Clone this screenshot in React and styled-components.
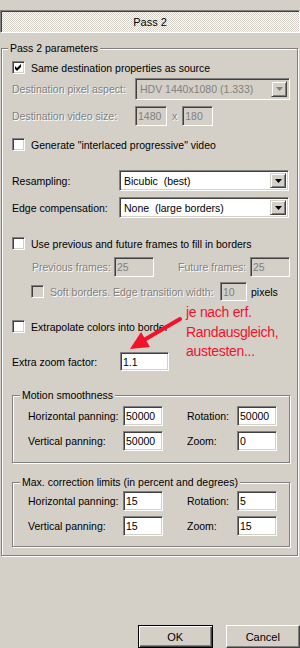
import React from 'react';
import styled, { createGlobalStyle } from 'styled-components';

const GlobalStyle = createGlobalStyle`
  html, body {
    margin: 0;
    padding: 0;
    background: #d4d0c8;
  }
  body {
    font-family: "Liberation Sans", Arial, sans-serif;
    font-size: 10.5px;
    color: #000;
  }
`;

const sunken = `
  border: 1px solid;
  border-color: #808080 #fff #fff #808080;
  box-shadow: inset 1px 1px 0 #404040, inset -1px -1px 0 #d4d0c8;
`;

const Window = styled.div`
  position: relative;
  width: 300px;
  height: 648px;
  overflow: hidden;
  display: flex;
  flex-direction: column;
  background: #d4d0c8;
`;

const PassHeader = styled.div`
  margin-top: 10px;
  height: 23px;
  box-sizing: border-box;
  border: 1px solid;
  border-color: #808080 #fff #fff #808080;
  box-shadow: inset 1px 1px 0 #404040;
  background: repeating-conic-gradient(#fff 0 25%, #d4d0c8 0 50%) 0 0 / 2px 2px;
  font-size: 11px;
  display: flex;
  align-items: center;
  justify-content: center;
`;

const Group = styled.fieldset`
  margin: ${(p) => p.$mt}px ${(p) => p.$mr}px 0 ${(p) => p.$ml}px;
  padding: 0 0 ${(p) => p.$pb}px 0;
  border: 1px solid #808080;
  box-shadow: inset 1px 1px 0 #fff, 1px 1px 0 #fff;
  min-width: 0;
  display: flex;
  flex-direction: column;
`;

const Legend = styled.legend`
  margin-left: ${(p) => p.$ml}px;
  padding: 0 2px;
  line-height: 13px;
  background: #d4d0c8;
`;

const Row = styled.div`
  display: flex;
  align-items: center;
  height: ${(p) => p.$h}px;
  margin-top: ${(p) => p.$mt}px;
  padding-left: ${(p) => p.$indent || 0}px;
`;

const Label = styled.span`
  width: ${(p) => (p.$w ? `${p.$w}px` : 'auto')};
  flex: none;
  white-space: nowrap;
  color: ${(p) => (p.$off ? '#808080' : '#000')};
  text-shadow: ${(p) => (p.$off ? '1px 1px 0 #fff' : 'none')};
  margin-left: ${(p) => p.$ml || 0}px;
`;

const PanGrid = styled.div`
  display: grid;
  grid-template-columns: 95px 40px 24px 50px 40px;
  grid-auto-rows: 20px;
  row-gap: 5px;
  align-items: center;
  margin-top: ${(p) => p.$mt}px;
  padding-left: 15px;
`;

const Field = styled.input`
  box-sizing: border-box;
  width: ${(p) => p.$w}px;
  height: ${(p) => p.$h || 20}px;
  margin: 0 0 0 ${(p) => p.$ml || 0}px;
  padding: 0 0 0 2px;
  font: 10.5px "Liberation Sans", Arial, sans-serif;
  color: ${(p) => (p.disabled ? '#808080' : '#000')};
  -webkit-text-fill-color: ${(p) => (p.disabled ? '#808080' : '#000')};
  background: ${(p) => (p.disabled ? '#d4d0c8' : '#fff')};
  outline: none;
  ${sunken}
`;

const Combo = styled.div`
  box-sizing: border-box;
  width: ${(p) => p.$w}px;
  height: ${(p) => p.$h}px;
  padding: 2px;
  display: flex;
  align-items: center;
  background: ${(p) => (p.$off ? '#d4d0c8' : '#fff')};
  ${sunken}
`;

const ComboText = styled.span`
  flex: 1;
  padding-left: 2px;
  white-space: pre;
  overflow: hidden;
  color: ${(p) => (p.$off ? '#808080' : '#000')};
`;

const DropButton = styled.span`
  align-self: stretch;
  width: 16px;
  box-sizing: border-box;
  background: #d4d0c8;
  border: 1px solid;
  border-color: #d4d0c8 #404040 #404040 #d4d0c8;
  box-shadow: inset 1px 1px 0 #fff, inset -1px -1px 0 #808080;
  display: flex;
  align-items: center;
  justify-content: center;
`;

const Box = styled.span`
  box-sizing: border-box;
  width: 13px;
  height: 13px;
  flex: none;
  margin-right: 6px;
  background: ${(p) => (p.$off ? '#d4d0c8' : '#fff')};
  display: flex;
  align-items: center;
  justify-content: center;
  ${sunken}
`;

const Note = styled.div`
  position: absolute;
  left: 186px;
  top: 303px;
  font-size: 14px;
  line-height: 19.5px;
  letter-spacing: -0.3px;
  color: #f3112c;
  white-space: nowrap;
`;

const ArrowLayer = styled.svg`
  position: absolute;
  left: 0;
  top: 0;
  pointer-events: none;
`;

const ButtonBar = styled.div`
  margin-top: auto;
  display: flex;
  gap: 13px;
  padding-left: 138px;
`;

const Button = styled.div`
  box-sizing: border-box;
  width: 75px;
  height: 23px;
  display: flex;
  align-items: center;
  justify-content: center;
  font-size: 11px;
  background: #d4d0c8;
  border: 1px solid;
  border-color: ${(p) => (p.$default ? '#000' : '#fff #404040 #404040 #fff')};
  box-shadow: ${(p) => (p.$default
    ? 'inset 1px 1px 0 #fff, inset -1px -1px 0 #404040, inset -2px -2px 0 #808080'
    : 'inset -1px -1px 0 #808080, inset 1px 1px 0 #d4d0c8')};
`;

function Arrow({ off }) {
  return (
    <svg width="7" height="4" viewBox="0 0 7 4">
      <polygon points="0,0 7,0 3.5,4" fill={off ? '#808080' : '#000'} />
    </svg>
  );
}

function Check({ checked, off, w, children }) {
  return (
    <>
      <Box $off={off}>
        {checked && (
          <svg width="9" height="9" viewBox="0 0 9 9">
            <path d="M1 3 L3 5 L7 1 L7 4 L3 8 L1 6 Z" fill="#000" />
          </svg>
        )}
      </Box>
      <Label $off={off} $w={w}>{children}</Label>
    </>
  );
}

function Select({ value, w, h, off }) {
  return (
    <Combo $w={w} $h={h} $off={off}>
      <ComboText $off={off}>{value}</ComboText>
      <DropButton>
        <Arrow off={off} />
      </DropButton>
    </Combo>
  );
}

function PanRows({ mt, values }) {
  return (
    <PanGrid $mt={mt}>
      <Label>Horizontal panning:</Label>
      <Field $w={40} defaultValue={values[0]} readOnly />
      <span />
      <Label>Rotation:</Label>
      <Field $w={40} defaultValue={values[1]} readOnly />
      <Label>Vertical panning:</Label>
      <Field $w={40} defaultValue={values[2]} readOnly />
      <span />
      <Label>Zoom:</Label>
      <Field $w={40} defaultValue={values[3]} readOnly />
    </PanGrid>
  );
}

export default function App() {
  return (
    <Window>
      <GlobalStyle />
      <PassHeader>Pass 2</PassHeader>

      <Group $mt={9} $ml={1} $mr={2} $pb={8}>
        <Legend $ml={6}>Pass 2 parameters</Legend>

        <Row $h={15} $mt={5} $indent={10}>
          <Check checked>Same destination properties as source</Check>
        </Row>
        <Row $h={22} $mt={3} $indent={10}>
          <Label $off $w={123}>Destination pixel aspect:</Label>
          <Select off value="HDV 1440x1080 (1.333)" w={155} h={22} />
        </Row>
        <Row $h={20} $mt={6} $indent={10}>
          <Label $off $w={123}>Destination video size:</Label>
          <Field disabled $w={32} defaultValue="1480" />
          <Label $off $ml={5}>x</Label>
          <Field disabled $w={31} $ml={5} defaultValue="180" />
        </Row>
        <Row $h={15} $mt={11} $indent={10}>
          <Check>Generate "interlaced progressive" video</Check>
        </Row>

        <Row $h={21} $mt={18} $indent={10}>
          <Label $w={107}>Resampling:</Label>
          <Select value="Bicubic  (best)" w={170} h={21} />
        </Row>
        <Row $h={21} $mt={6} $indent={10}>
          <Label $w={107}>Edge compensation:</Label>
          <Select value="None  (large borders)" w={170} h={21} />
        </Row>

        <Row $h={15} $mt={18} $indent={10}>
          <Check>Use previous and future frames to fill in borders</Check>
        </Row>
        <Row $h={20} $mt={6} $indent={30}>
          <Label $off $w={82}>Previous frames:</Label>
          <Field disabled $w={40} defaultValue="25" />
          <Label $off $ml={24} $w={72}>Future frames:</Label>
          <Field disabled $w={40} defaultValue="25" />
        </Row>
        <Row $h={19} $mt={5} $indent={29}>
          <Check off w={170}>Soft borders. Edge transition width:</Check>
          <Field disabled $w={27} $h={19} defaultValue="10" />
          <Label $ml={4}>pixels</Label>
        </Row>

        <Row $h={15} $mt={18} $indent={10}>
          <Check>Extrapolate colors into border</Check>
        </Row>
        <Row $h={19} $mt={18} $indent={10}>
          <Label $w={108}>Extra zoom factor:</Label>
          <Field $w={49} $h={19} defaultValue="1.1" readOnly />
        </Row>

        <Group $mt={18} $ml={10} $mr={7} $pb={11}>
          <Legend $ml={7}>Motion smoothness</Legend>
          <PanRows mt={4} values={['50000', '50000', '50000', '0']} />
        </Group>

        <Group $mt={13} $ml={10} $mr={7} $pb={10}>
          <Legend $ml={7}>Max. correction limits (in percent and degrees)</Legend>
          <PanRows mt={2} values={['15', '5', '15', '15']} />
        </Group>
      </Group>

      <ButtonBar>
        <Button $default>OK</Button>
        <Button>Cancel</Button>
      </ButtonBar>

      <Note>
        je nach erf.
        <br />
        Randausgleich,
        <br />
        austesten...
      </Note>
      <ArrowLayer width="300" height="648" viewBox="0 0 300 648">
        <line x1="180" y1="319" x2="144" y2="340" stroke="#f3112c" strokeWidth="4" strokeLinecap="round" />
        <polygon points="130,349 141,332 150,347" fill="#f3112c" />
      </ArrowLayer>
    </Window>
  );
}
